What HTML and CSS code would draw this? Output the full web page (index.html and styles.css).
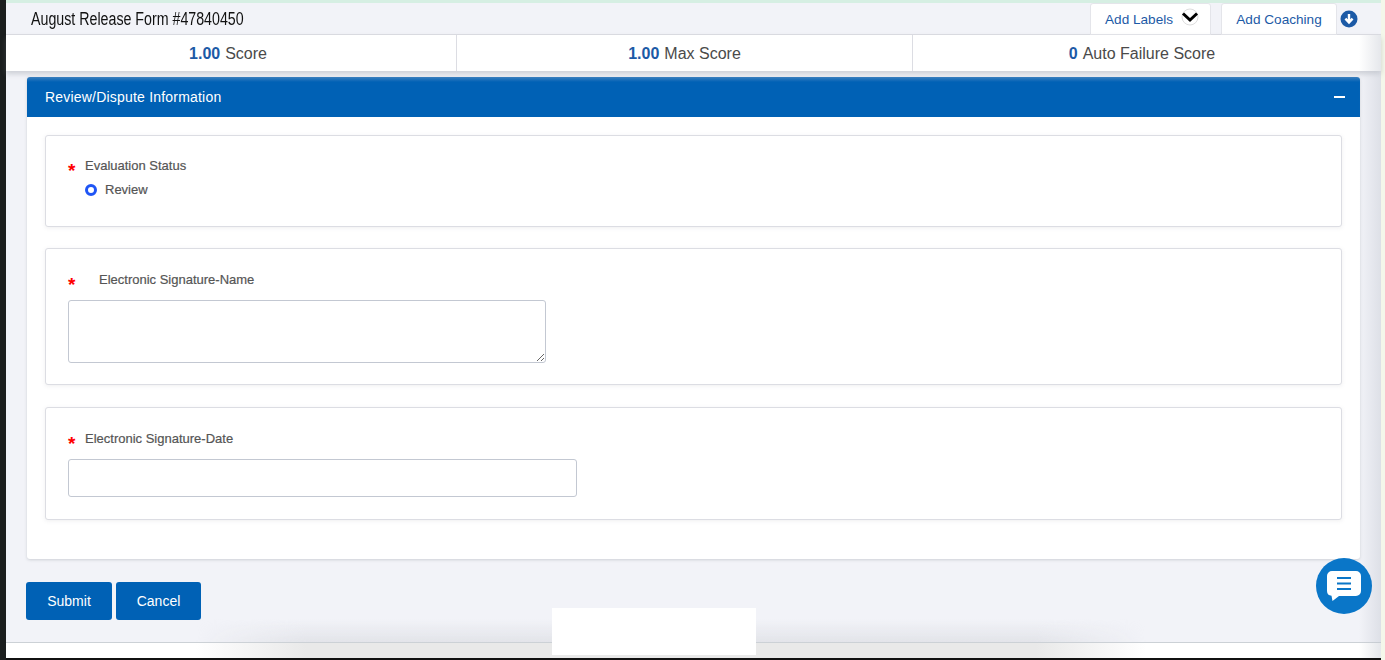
FILE: index.html
```html
<!DOCTYPE html>
<html lang="en">
<head>
<meta charset="utf-8">
<title>August Release Form</title>
<link rel="stylesheet" href="styles.css">
</head>
<body>
<div class="left-bar"></div>
<div class="main">
  <div class="top-strip"></div>
  <header class="title-bar">
    <h1 class="title">August Release Form #47840450</h1>
    <div class="actions">
      <button class="tab tab-labels">Add Labels
        <svg class="chev" width="20" height="18" viewBox="0 0 20 18"><circle cx="10" cy="9" r="8" fill="#fff" stroke="#ddd"/><path d="M3 5.500 10 12l7-6.500" fill="none" stroke="#000" stroke-width="3"/></svg>
      </button>
      <button class="tab tab-coaching">Add Coaching</button>
      <svg class="down" width="18" height="18" viewBox="0 0 18 18"><circle cx="9" cy="9" r="8.500" fill="#1c5aa6"/><path d="M9 4v8M5.400 8.600 9 12.400l3.600-3.800" fill="none" stroke="#fff" stroke-width="2.400"/></svg>
    </div>
  </header>
  <section class="scores">
    <div class="score score-first"><b>1.00</b> Score</div>
    <div class="score score-second"><b>1.00</b> Max Score</div>
    <div class="score score-third"><b>0</b> Auto Failure Score</div>
  </section>
  <div class="content">
    <section class="panel">
      <div class="panel-head">
        <span>Review/Dispute Information</span>
        <span class="minus"></span>
      </div>
      <div class="panel-body">
        <div class="card card-status">
          <div class="label-row"><span class="star">*</span><span class="label">Evaluation Status</span></div>
          <div class="radio-row"><span class="radio"></span><span class="label">Review</span></div>
        </div>
        <div class="card card-name">
          <div class="label-row"><span class="star">*</span><span class="label label-indent">Electronic Signature-Name</span></div>
          <textarea class="area"></textarea>
        </div>
        <div class="card card-date">
          <div class="label-row"><span class="star">*</span><span class="label">Electronic Signature-Date</span></div>
          <input class="date" type="text">
        </div>
      </div>
    </section>
    <div class="buttons">
      <button class="btn btn-submit">Submit</button>
      <button class="btn btn-cancel">Cancel</button>
    </div>
  </div>
  <footer class="footer"></footer>
  <div class="white-box"></div>
  <button class="chat" aria-label="Chat">
    <svg width="36" height="34" viewBox="0 0 36 34"><path d="M6 1h24a5 5 0 0 1 5 5v15a5 5 0 0 1-5 5H13l-6.500 5-1-5.200A5 5 0 0 1 1 21V6a5 5 0 0 1 5-5z" fill="#fff"/><path d="M11 8h14M11 13.500h14M11 19h14" stroke="#0a76c8" stroke-width="2"/></svg>
  </button>
</div>
<div class="right-strip"></div>
</body>
</html>
```
FILE: styles.css
```css
* { box-sizing: border-box; }
html, body { margin: 0; height: 660px; overflow: hidden; }
body {
  display: flex;
  font-family: "Liberation Sans", Arial, sans-serif;
  color: #4a4a4a;
  background: #f2f3f7;
}
.left-bar { width: 6px; background: #1b1e1e; }
.right-strip { width: 4px; background: #f4f7ea; }
.main {
  flex: 1;
  min-width: 0;
  position: relative;
  display: flex;
  flex-direction: column;
  background: #f2f3f8;
  border-bottom: 2px solid #111;
}
.main::after {
  content: "";
  position: absolute;
  top: 35px;
  right: 0;
  bottom: 0;
  width: 22px;
  background: linear-gradient(90deg, rgba(190,195,205,0), rgba(190,195,205,.4));
  pointer-events: none;
}
.top-strip { height: 3px; background: #d6efe3; flex: none; }

.title-bar {
  height: 32px;
  flex: none;
  display: flex;
  justify-content: space-between;
  border-bottom: 1px solid #dcdde3;
  padding-left: 25px;
}
.title {
  margin: 0;
  font-weight: 400;
  font-size: 18px;
  line-height: 33px;
  color: #111;
  white-space: nowrap;
  width: 213px;
  transform: scaleX(.79);
  transform-origin: left center;
}
.actions { display: flex; align-items: flex-start; padding-right: 23px; }
.tab {
  height: 32px;
  background: #fff;
  border: 1px solid #e4e5ea;
  border-radius: 3px 3px 0 0;
  font: 13.600px "Liberation Sans", sans-serif;
  color: #1c5aa6;
  padding: 0;
  display: flex;
  align-items: center;
}
.tab-labels { width: 121px; padding-left: 14px; gap: 7px; margin-right: 10px; }
.tab-coaching { width: 116px; justify-content: center; margin-right: 3px; }
.chev { margin-top: -4px; }
.down { margin-top: 7px; }

.scores {
  height: 36px;
  flex: none;
  display: flex;
  background: #fff;
  position: relative;
  box-shadow: 0 3px 5px rgba(120,125,135,.3);
}
.score {
  display: flex;
  align-items: center;
  justify-content: center;
  gap: 5px;
  padding-top: 2px;
  font-size: 16px;
  color: #4a4a4a;
  border-right: 1px solid #dcdde3;
}
.score-first { width: 451px; padding-right: 6px; }
.score-second { width: 456px; }
.score-third { flex: 1; border-right: 0; padding-right: 10px; }
.score b { color: #1c5aa6; }

.content { flex: 1; padding: 6px 21px 0 20px; }
.panel {
  background: #fff;
  border-radius: 3px;
  margin: 0 0 23px 1px;
  height: 482px;
  box-shadow: 0 1px 3px rgba(120,125,135,.3);
}
.panel-head {
  height: 40px;
  background: linear-gradient(#3a7fc0 0, #0061b5 5px);
  border-radius: 3px 3px 0 0;
  color: #fff;
  font-size: 14px;
  letter-spacing: .2px;
  display: flex;
  align-items: center;
  justify-content: space-between;
  padding: 0 15px 0 18px;
}
.minus { width: 11px; height: 2px; background: #fff; }
.panel-body {
  padding: 18px 18px 0;
  display: flex;
  flex-direction: column;
  gap: 21px;
}
.card {
  background: #fff;
  border: 1px solid #dcdde3;
  border-radius: 3px;
  box-shadow: 0 1px 4px rgba(120,125,135,.12);
  padding: 0 22px;
}
.card-status { height: 92px; padding-top: 22px; }
.card-name { height: 137px; padding-top: 23px; }
.card-date { height: 113px; padding-top: 23px; margin-top: 1px; }

.label-row { display: flex; align-items: flex-start; height: 16px; }
.star {
  width: 17px;
  color: #f00;
  font-size: 19px;
  font-weight: 700;
  line-height: 26px;
}
.label { font-size: 13px; line-height: 16px; color: #555; -webkit-text-stroke: .2px #555; }
.label-indent { margin-left: 14px; }
.radio-row { display: flex; align-items: center; gap: 8px; margin: 8px 0 0 17px; height: 16px; }
.radio {
  width: 12px;
  height: 12px;
  border-radius: 50%;
  border: 3.500px solid #1f55f5;
  background: #fff;
}
.area {
  display: block;
  width: 478px;
  height: 63px;
  margin: 12px 0 0;
  border: 1px solid #c3c8d2;
  border-radius: 3px;
  background: #fff;
}
.date {
  display: block;
  width: 509px;
  height: 38px;
  margin: 12px 0 0;
  border: 1px solid #c3c8d2;
  border-radius: 3px;
  background: #fff;
}
.buttons { display: flex; gap: 4px; }
.btn {
  height: 38px;
  border: 0;
  border-radius: 3px;
  background: #0061b5;
  color: #fff;
  font: 14px "Liberation Sans", sans-serif;
  padding: 0;
}
.btn-submit { width: 86px; }
.btn-cancel { width: 85px; }

.footer {
  height: 16px;
  flex: none;
  position: relative;
  background: linear-gradient(90deg, #fff 190px, #e9e9e9 300px, #e9e9e9 1030px, #fff 1140px);
  border-top: 1px solid #ccd1d6;
}
.footer::before {
  content: "";
  position: absolute;
  left: 190px;
  width: 950px;
  top: -24px;
  height: 23px;
  background: linear-gradient(rgba(215,217,222,0), rgba(215,217,222,.55));
  -webkit-mask-image: linear-gradient(90deg, transparent, #000 110px, #000 840px, transparent);
  mask-image: linear-gradient(90deg, transparent, #000 110px, #000 840px, transparent);
}
.white-box {
  position: absolute;
  left: 546px;
  top: 608px;
  width: 204px;
  height: 47px;
  background: #fff;
}
.chat {
  position: absolute;
  z-index: 1;
  left: 1310px;
  top: 558px;
  width: 56px;
  height: 56px;
  border: 0;
  padding: 2px 0 0;
  border-radius: 50%;
  background: #0a76c8;
  display: flex;
  align-items: center;
  justify-content: center;
}
```
